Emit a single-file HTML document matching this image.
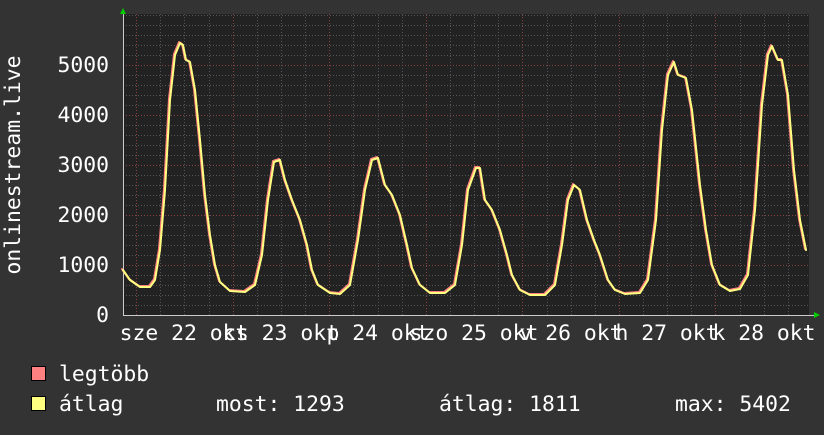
<!DOCTYPE html>
<html><head><meta charset="utf-8"><style>
body{margin:0;background:#333;width:824px;height:430px;overflow:hidden;}
svg text{font-family:"DejaVu Sans Mono","Liberation Mono",monospace;font-size:21.4px;fill:#fff;}
</style></head><body>
<svg width="824" height="430" xmlns="http://www.w3.org/2000/svg">
<rect width="824" height="430" fill="#333"/>
<rect x="123" y="14" width="686" height="301" fill="#222"/>
<g stroke="#555" stroke-width="1" stroke-dasharray="1,2">
<path d="M123 305.5H809M123 295.5H809M123 285.5H809M123 275.5H809M123 255.5H809M123 245.5H809M123 235.5H809M123 225.5H809M123 205.5H809M123 195.5H809M123 185.5H809M123 175.5H809M123 155.5H809M123 145.5H809M123 135.5H809M123 125.5H809M123 105.5H809M123 95.5H809M123 85.5H809M123 75.5H809M123 55.5H809M123 45.5H809M123 35.5H809M123 25.5H809M123 15.5H809"/>
<path d="M160.5 14V315M184.5 14V315M209.5 14V315M257.5 14V315M281.5 14V315M305.5 14V315M353.5 14V315M378.5 14V315M402.5 14V315M450.5 14V315M474.5 14V315M498.5 14V315M547.5 14V315M571.5 14V315M595.5 14V315M643.5 14V315M667.5 14V315M691.5 14V315M740.5 14V315M764.5 14V315M788.5 14V315"/>
</g>
<g stroke="#844" stroke-width="1" stroke-dasharray="1,2">
<path d="M123 265.5H809M123 215.5H809M123 165.5H809M123 115.5H809M123 65.5H809"/>
<path d="M136.5 14V315M233.5 14V315M329.5 14V315M426.5 14V315M522.5 14V315M619.5 14V315M715.5 14V315"/>
</g>
<path d="M123 315.5H816" stroke="#ccc"/>
<path d="M123.5 10V315" stroke="#ccc"/>
<polygon points="120,14 126,14 123,8" fill="#0c0"/>
<polygon points="814,312 814,318 820,315" fill="#0c0"/>
<g fill="none" stroke-width="2" stroke-linejoin="round" stroke-linecap="round">
<polyline stroke="#ff7f7f" transform="translate(-1,-1)" points="123,270 130,280 140,287 150,287 155,280 160,250 165,190 170,100 175,55 180,43 183,45 186,60 190,62 195,90 200,140 205,195 210,235 215,265 220,282 230,291 245,292 255,285 262,255 268,200 274,162 280,160 285,180 292,200 300,220 307,245 312,270 318,285 330,293 340,294 350,285 358,240 365,190 372,160 378,158 385,185 392,195 400,215 407,245 412,268 420,285 430,293 445,293 455,285 462,245 468,190 476,168 480,168 485,200 492,210 500,230 507,255 512,275 520,290 530,295 545,295 555,285 562,245 568,200 574,185 580,190 587,220 594,240 600,255 608,280 615,290 625,294 640,293 648,280 656,220 662,130 668,75 674,62 678,75 686,78 692,110 700,185 706,230 712,265 720,285 730,291 740,289 748,275 755,210 762,105 768,55 772,46 778,60 782,60 788,95 794,170 800,220 806,250"/>
<polyline stroke="#ffff80" points="123,270 130,280 140,287 150,287 155,280 160,250 165,190 170,100 175,55 180,43 183,45 186,60 190,62 195,90 200,140 205,195 210,235 215,265 220,282 230,291 245,292 255,285 262,255 268,200 274,162 280,160 285,180 292,200 300,220 307,245 312,270 318,285 330,293 340,294 350,285 358,240 365,190 372,160 378,158 385,185 392,195 400,215 407,245 412,268 420,285 430,293 445,293 455,285 462,245 468,190 476,168 480,168 485,200 492,210 500,230 507,255 512,275 520,290 530,295 545,295 555,285 562,245 568,200 574,185 580,190 587,220 594,240 600,255 608,280 615,290 625,294 640,293 648,280 656,220 662,130 668,75 674,62 678,75 686,78 692,110 700,185 706,230 712,265 720,285 730,291 740,289 748,275 755,210 762,105 768,55 772,46 778,60 782,60 788,95 794,170 800,220 806,250"/>
</g>
<g text-anchor="end">
<text x="109" y="322">0</text>
<text x="109" y="272">1000</text>
<text x="109" y="222">2000</text>
<text x="109" y="172">3000</text>
<text x="109" y="122">4000</text>
<text x="109" y="72">5000</text>
</g>
<text transform="translate(20,165) rotate(-90)" text-anchor="middle">onlinestream.live</text>
<g text-anchor="middle">
<text x="184" y="340">sze 22 okt</text>
<text x="281" y="340">cs 23 okt</text>
<text x="378" y="340">p 24 okt</text>
<text x="474" y="340">szo 25 okt</text>
<text x="571" y="340">v 26 okt</text>
<text x="667" y="340">h 27 okt</text>
<text x="764" y="340">k 28 okt</text>
</g>
<rect x="31.5" y="366.5" width="14" height="14" fill="#ff8080" stroke="#000" stroke-width="1"/>
<rect x="31.5" y="396.5" width="14" height="14" fill="#ffff80" stroke="#000" stroke-width="1"/>
<text x="59" y="381">legtöbb</text>
<text x="59" y="411">átlag</text>
<text x="216" y="411">most: 1293</text>
<text x="439" y="411">átlag: 1811</text>
<text x="675" y="411">max: 5402</text>
</svg>
</body></html>
